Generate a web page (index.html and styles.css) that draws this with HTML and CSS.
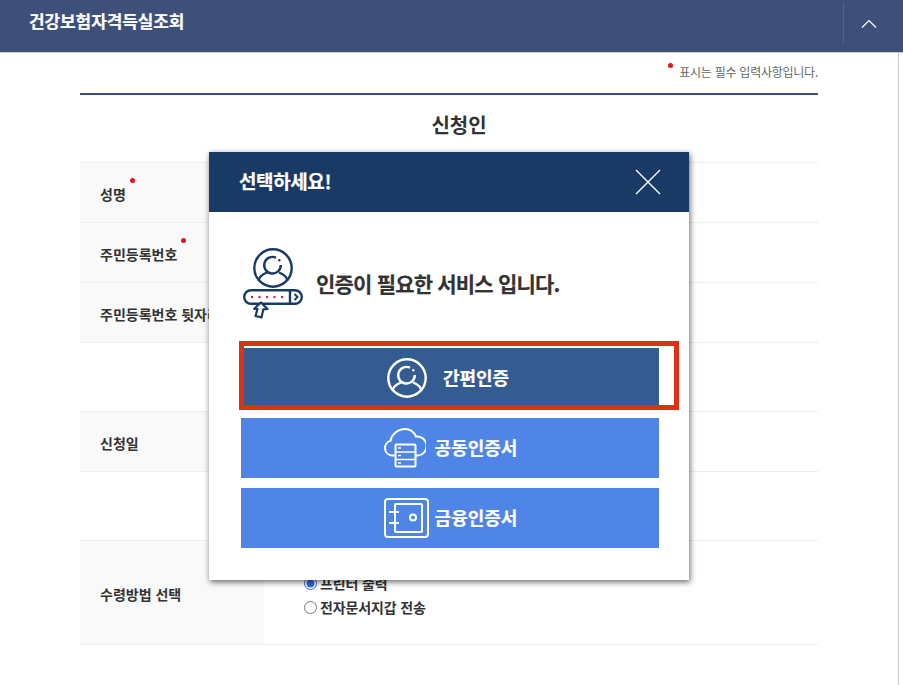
FILE: index.html
```html
<!DOCTYPE html>
<html lang="ko">
<head>
<meta charset="utf-8">
<title>건강보험자격득실조회</title>
<link rel="stylesheet" href="styles.css">
</head>
<body>
<svg class="defs" width="0" height="0" aria-hidden="true">
  <symbol id="person" viewBox="0 0 40 40">
    <circle cx="20" cy="20" r="18.7" fill="none" stroke="currentColor" stroke-width="2.4"/>
    <path d="M23 9.700A8.300 8.300 0 1 0 27.800 17" fill="none" stroke="currentColor" stroke-width="2.400"/>
    <circle cx="26.300" cy="12.300" r="1.200" fill="currentColor"/>
    <path d="M5.500 33C6 29 9 26.500 14 24.500M34.500 33C34 29 31 26.500 26 24.500" fill="none" stroke="currentColor" stroke-width="2.400"/>
  </symbol>
</svg>
<header class="topbar">
  <h1 class="topbar-title">건강보험자격득실조회</h1>
  <button class="topbar-toggle" type="button" aria-label="접기">
    <svg width="16" height="10" viewBox="0 0 16 10"><path d="M1 8.500 8 1.500l7 7" fill="none" stroke="#fff" stroke-width="1.200"/></svg>
  </button>
</header>
<main class="content">
  <p class="note"><i class="dot dot-note"></i>표시는 필수 입력사항입니다.</p>
  <h2 class="section-title">신청인</h2>
  <div class="form">
    <div class="row row-60"><div class="label"><span class="label-text">성명<i class="dot dot-label"></i></span></div><div class="value"></div></div>
    <div class="row row-60"><div class="label"><span class="label-text">주민등록번호<i class="dot dot-label"></i></span></div><div class="value"></div></div>
    <div class="row row-60"><div class="label"><span class="label-text">주민등록번호 뒷자리</span></div><div class="value"></div></div>
    <div class="row row-69"><div class="label label-plain"></div><div class="value"></div></div>
    <div class="row row-60"><div class="label"><span class="label-text">신청일</span></div><div class="value"></div></div>
    <div class="row row-69"><div class="label label-plain"></div><div class="value"></div></div>
    <div class="row row-104">
      <div class="label"><span class="label-text">수령방법 선택</span></div>
      <div class="value value-radios">
        <label class="radio"><input type="radio" name="recv" checked>프린터 출력</label>
        <label class="radio"><input type="radio" name="recv">전자문서지갑 전송</label>
      </div>
    </div>
  </div>
</main>
<section class="modal" role="dialog" aria-label="선택하세요!">
  <div class="modal-head">
    <h3 class="modal-title">선택하세요!</h3>
    <button class="modal-close" type="button" aria-label="닫기">
      <svg width="26" height="26" viewBox="0 0 26 26"><path d="M1 1l24 24M25 1 1 25" fill="none" stroke="#fff" stroke-width="1.400"/></svg>
    </button>
  </div>
  <div class="modal-body">
    <div class="notice">
      <svg class="notice-icon" width="60" height="72" viewBox="0 0 60 72">
        <use href="#person" x="10" y="1" width="40" height="40" color="#1a3a66"/>
        <rect x="1.200" y="43.200" width="57.600" height="13.600" rx="6.800" fill="#fff" stroke="#1a3a66" stroke-width="2.400"/>
        <path d="M47 43v14" stroke="#1a3a66" stroke-width="2.400"/>
        <path d="M51.500 47l3 3-3 3" fill="none" stroke="#1a3a66" stroke-width="2"/>
        <g fill="#d8203a"><circle cx="9" cy="50" r="1.200"/><circle cx="16.500" cy="50" r="1.200"/><circle cx="24" cy="50" r="1.200"/><circle cx="31.500" cy="50" r="1.200"/><circle cx="39" cy="50" r="1.200"/></g>
        <path d="M18 55.500 24.500 62l-4.200.4-1.800 8L12.500 69l2-7-3.300-.2z" fill="#fff" stroke="#1a3a66" stroke-width="2.200" stroke-linejoin="round"/>
      </svg>
      <p class="notice-text">인증이 필요한 서비스 입니다.</p>
    </div>
    <div class="auth-list">
      <button class="auth auth-simple" type="button">
        <svg class="auth-icon" width="40" height="40" viewBox="0 0 40 40"><use href="#person"/></svg>
        <span class="auth-label">간편인증</span>
      </button>
      <button class="auth auth-cloud" type="button">
        <svg class="auth-icon" width="42" height="40" viewBox="0 0 42 40">
          <path d="M10.500 27.500H8A7.500 7.500 0 0 1 6.500 12.800C8 6 14 1 21 1c5 0 9 3 11 7.500a9.500 9.500 0 0 1 2 19h-2.500" fill="none" stroke="#fff" stroke-width="2"/>
          <rect x="11.500" y="16.500" width="20" height="22" rx="1" fill="none" stroke="#fff" stroke-width="2"/>
          <path d="M11.500 24h20M11.500 31.500h20" stroke="#fff" stroke-width="1.600"/>
          <path d="M14 20h3M14 27.500h3M14 35h3" stroke="#fff" stroke-width="1.600"/>
        </svg>
        <span class="auth-label">공동인증서</span>
      </button>
      <button class="auth auth-safe" type="button">
        <svg class="auth-icon" width="45" height="40" viewBox="0 0 45 40">
          <rect x="1" y="1" width="43" height="38" rx="3" fill="none" stroke="#fff" stroke-width="2"/>
          <rect x="11" y="6" width="27" height="28" rx="1" fill="none" stroke="#fff" stroke-width="2"/>
          <path d="M5 14h10M5 25h10" stroke="#fff" stroke-width="2"/>
          <circle cx="29" cy="19.500" r="3" fill="none" stroke="#fff" stroke-width="2"/>
        </svg>
        <span class="auth-label">금융인증서</span>
      </button>
      <span class="focus-ring"></span>
    </div>
  </div>
</section>
</body>
</html>
```
FILE: styles.css
```css
* { box-sizing: border-box; }
html, body { margin: 0; padding: 0; }
body {
  background: #fff;
  color: #333;
  font-family: "Noto Sans CJK KR", "Noto Sans", sans-serif;
  height: 685px;
  overflow: hidden;
}
.defs { position: absolute; }
button { font-family: inherit; border: 0; padding: 0; cursor: pointer; }

.topbar {
  height: 53px;
  background: #3e4f79;
  border-bottom: 1px solid #ccc;
  display: flex;
  align-items: flex-start;
  justify-content: space-between;
  padding-left: 29px;
}
.topbar-title {
  margin: 9px 0 0;
  font-size: 17px;
  line-height: 24px;
  font-weight: 700;
  letter-spacing: -.1px;
  color: #fff;
  -webkit-text-stroke: .2px #fff;
}
.topbar-toggle {
  width: 60px;
  height: 41px;
  margin-top: 3px;
  background: transparent;
  border-left: 1px solid #52628a;
  display: flex;
  align-items: center;
  justify-content: center;
  padding-right: 10px;
}

.content {
  width: 899px;
  height: 632px;
  padding: 0 80px 0 80px;
  border-right: 1px solid #ccc;
}
.note {
  margin: 0;
  height: 42px;
  padding-top: 11px;
  border-bottom: 2px solid #3e4f79;
  text-align: right;
  font-size: 12px;
  line-height: 16px;
  letter-spacing: -.25px;
  color: #666;
  position: relative;
}
.dot { position: absolute; width: 5px; height: 5px; border-radius: 50%; background: #e0141f; }
.dot-note { right: 145px; top: 10px; }
.section-title {
  margin: 0;
  height: 67px;
  padding: 15px 0 0 20px;
  text-align: center;
  font-size: 20px;
  line-height: 30px;
  font-weight: 700;
  color: #333;
}
.form { border-top: 1px solid #eee; }
.row { display: flex; border-bottom: 1px solid #eee; }
.row-60 { height: 60px; }
.row-69 { height: 69px; }
.row-104 { height: 104px; }
.label {
  width: 184px;
  background: #f9f9f9;
  padding-left: 20px;
  display: flex;
  align-items: center;
  font-size: 14px;
  font-weight: 700;
  color: #333;
}
.label-plain { background: #fff; }
.label-text { position: relative; white-space: nowrap; padding-top: 2px; line-height: 20px; }
.dot-label { right: -9px; top: -4px; }
.value { flex: 1; }
.value-radios {
  display: flex;
  flex-direction: column;
  justify-content: flex-start;
  gap: 4px;
  padding: 32px 0 0 40px;
}
.radio {
  display: flex;
  align-items: center;
  height: 20px;
  font-size: 14px;
  font-weight: 700;
  letter-spacing: -.12px;
  color: #333;
}
.radio input { margin: 0 3px 0 0; width: 13px; height: 13px; accent-color: #2f6de0; }

.modal {
  position: absolute;
  left: 209px;
  top: 152px;
  width: 480px;
  height: 428px;
  background: #fff;
  box-shadow: 1px 2px 6px rgba(0, 0, 0, .6);
}
.modal-head {
  height: 60px;
  background: #1a3a66;
  display: flex;
  align-items: center;
  justify-content: space-between;
  padding: 0 28px 0 30px;
}
.modal-title {
  margin: 0 0 3px;
  font-size: 19px;
  line-height: 26px;
  font-weight: 700;
  letter-spacing: -.4px;
  color: #fff;
  -webkit-text-stroke: .2px #fff;
}
.modal-close { background: transparent; width: 26px; height: 26px; display: block; }
.modal-close svg { display: block; }
.modal-body { padding: 35px 30px 0 32px; }
.notice { display: flex; align-items: flex-start; gap: 13px; height: 101px; padding-left: 2px; }
.notice-icon { display: block; flex: none; }
.notice-text {
  margin: 21px 0 0;
  font-size: 21px;
  line-height: 30px;
  font-weight: 700;
  letter-spacing: -.8px;
  color: #333;
  -webkit-text-stroke: .2px #333;
}
.auth-list { position: relative; display: flex; flex-direction: column; gap: 10px; }
.auth {
  height: 60px;
  display: flex;
  align-items: center;
  justify-content: center;
  background: #4f85e6;
  color: #fff;
  font-size: 18px;
  font-weight: 700;
}
.auth-label { margin-bottom: 2px; -webkit-text-stroke: .2px #fff; }
.auth-icon { display: block; flex: none; }
.auth-simple { background: #355c91; gap: 16px; padding-right: 4px; }
.auth-cloud { gap: 9px; padding-left: 1px; }
.auth-safe { gap: 6px; padding-left: 1px; }
.focus-ring {
  position: absolute;
  left: -2px;
  top: -7px;
  width: 440px;
  height: 69px;
  border: 5px solid #e12f16;
  pointer-events: none;
}
```
